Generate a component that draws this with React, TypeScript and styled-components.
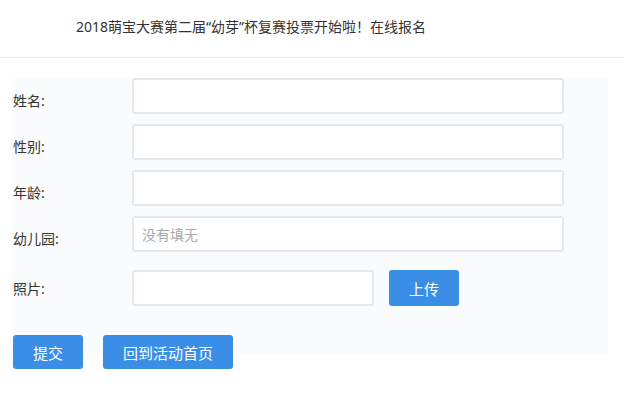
import React from 'react';
import styled, { createGlobalStyle } from 'styled-components';

const GlobalStyle = createGlobalStyle`
  body {
    margin: 0;
    background: #fff;
    font-family: "Noto Sans", "Noto Sans CJK SC", sans-serif;
    color: #333;
  }
`;

const Header = styled.div`
  height: 58px;
  box-sizing: border-box;
  border-bottom: 1px solid #eeeeee;
  display: flex;
  align-items: center;
  padding: 0 0 5px 76px;
  font-size: 14px;
  color: #333;
`;

const Form = styled.form`
  margin: 20px 16px 0 12px;
`;

const Panel = styled.div`
  background: #fafbfc;
  padding-bottom: 48px;
`;

const Row = styled.div<{ $gap?: number }>`
  display: flex;
  align-items: center;
  margin-bottom: ${(p) => p.$gap ?? 10}px;
`;

const Label = styled.label<{ $offset?: number }>`
  width: 120px;
  padding-left: 1px;
  padding-top: ${(p) => p.$offset ?? 7}px;
  font-size: 14px;
  color: #333;
  box-sizing: border-box;
  flex-shrink: 0;
`;

const Input = styled.input<{ $width?: number }>`
  width: ${(p) => p.$width ?? 432}px;
  height: 36px;
  box-sizing: border-box;
  border: 2px solid #e3e8ee;
  border-radius: 3px;
  background: #fff;
  padding: 0 8px;
  font-family: inherit;
  font-size: 14px;
  color: #333;
  outline: none;
  &::placeholder {
    color: #a9a9a9;
  }
`;

const Button = styled.button<{ $width: number; $height?: number }>`
  width: ${(p) => p.$width}px;
  height: ${(p) => p.$height ?? 34}px;
  flex-shrink: 0;
  border: none;
  border-radius: 3px;
  background: #3a8ee6;
  color: #fff;
  font-family: inherit;
  font-size: 15px;
  cursor: pointer;
  padding: 0;
`;

const UploadButton = styled(Button)`
  margin-left: 15px;
`;

const Actions = styled.div`
  position: relative;
  display: flex;
  gap: 20px;
  margin-top: -19px;
  margin-left: 1px;
`;

const fields = [
  { label: '姓名:', placeholder: '' },
  { label: '性别:', placeholder: '' },
  { label: '年龄:', placeholder: '' },
  { label: '幼儿园:', placeholder: '没有填无' },
];

export default function App() {
  return (
    <>
      <GlobalStyle />
      <Header>2018萌宝大赛第二届“幼芽”杯复赛投票开始啦！在线报名</Header>
      <Form onSubmit={(e) => e.preventDefault()}>
        <Panel>
          {fields.map((f, i) => (
            <Row key={f.label} $gap={i === fields.length - 1 ? 18 : 10}>
              <Label>{f.label}</Label>
              <Input placeholder={f.placeholder} />
            </Row>
          ))}
          <Row $gap={0}>
            <Label $offset={0}>照片:</Label>
            <Input $width={242} />
            <UploadButton type="button" $width={70} $height={36}>上传</UploadButton>
          </Row>
        </Panel>
        <Actions>
          <Button $width={70}>提交</Button>
          <Button type="button" $width={130}>回到活动首页</Button>
        </Actions>
      </Form>
    </>
  );
}
